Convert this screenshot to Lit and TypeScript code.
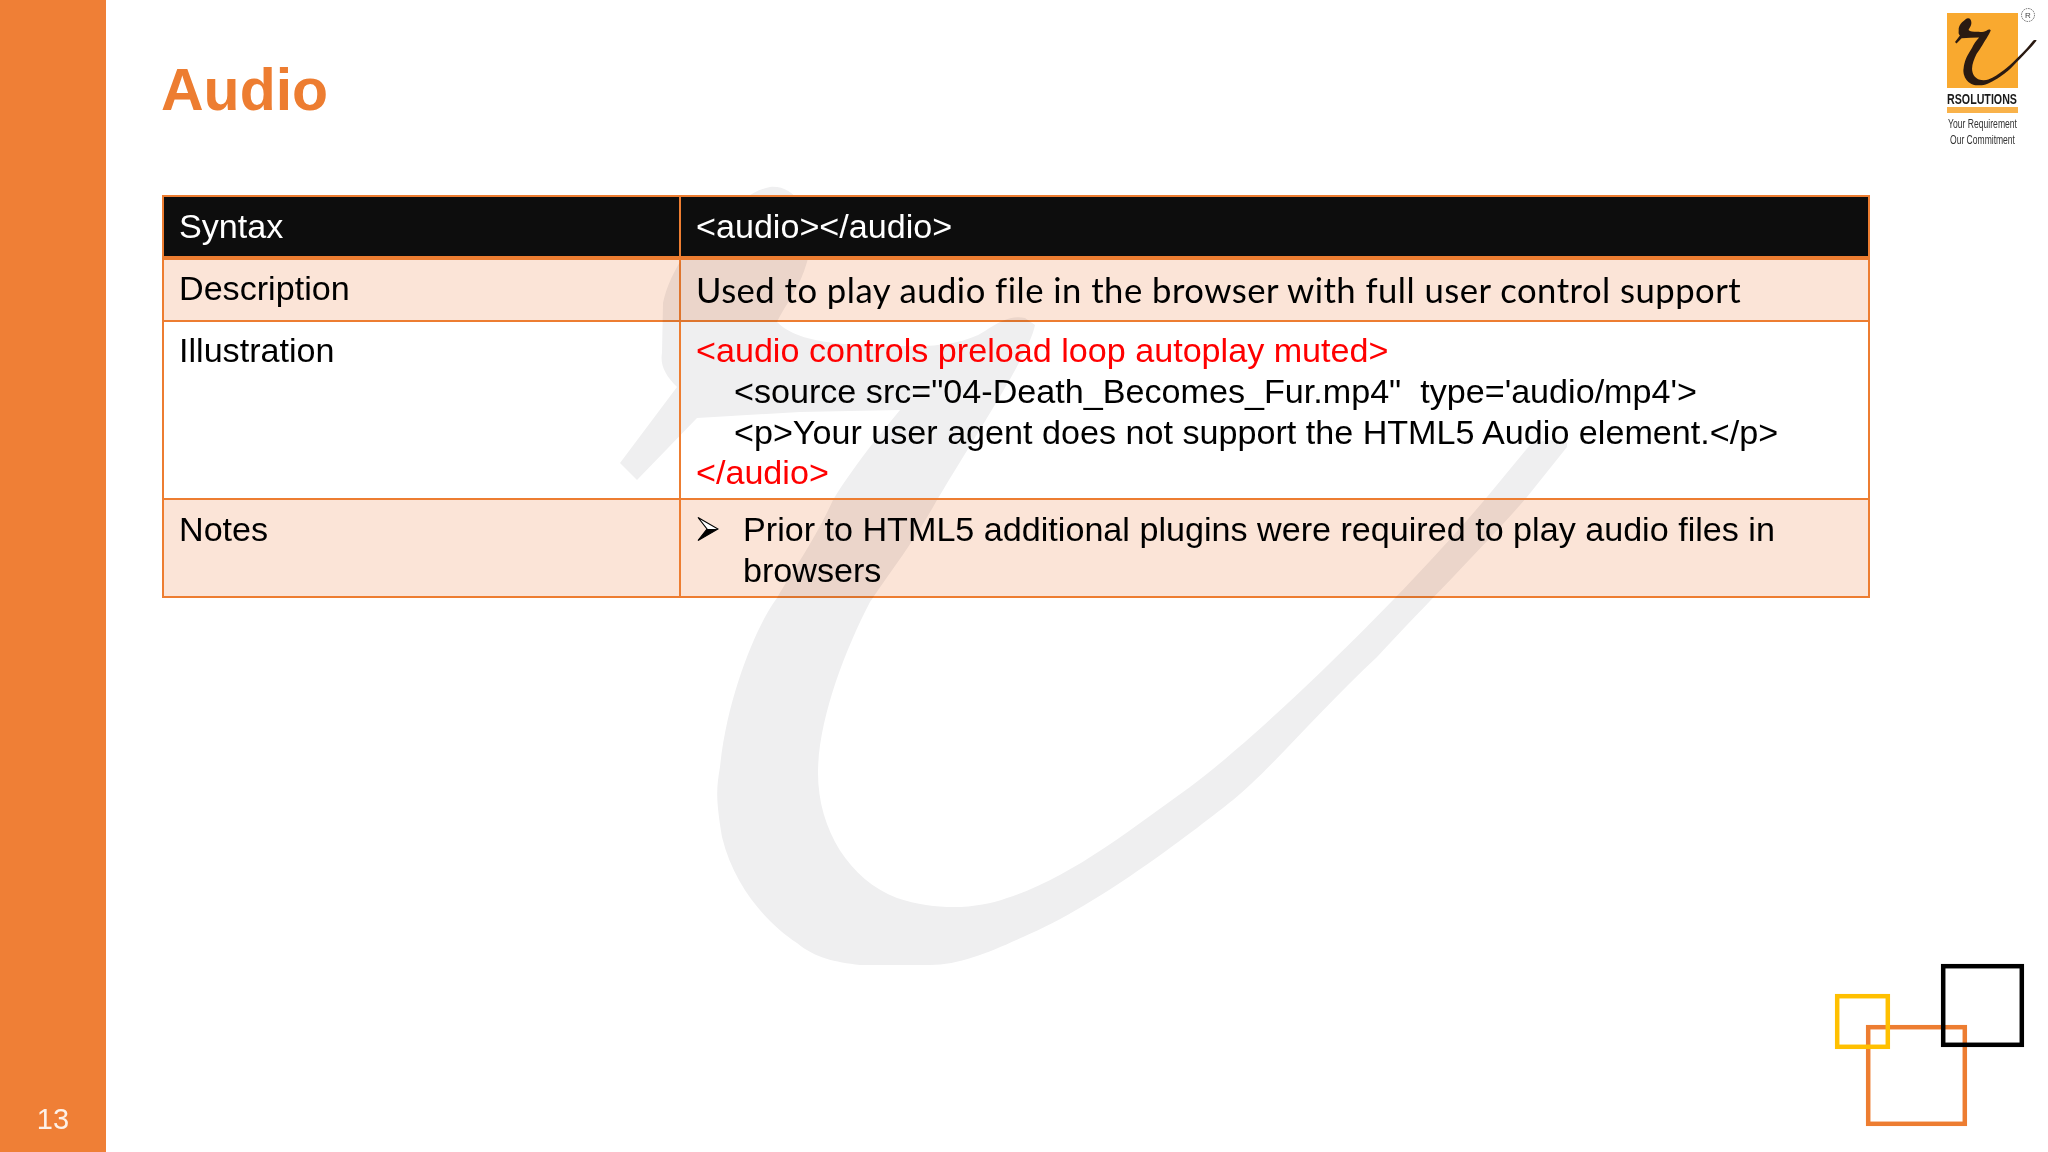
import { LitElement, html, css, svg } from "lit";
import { customElement } from "lit/decorators.js";

const R_PATH = `M770 187 C800 184 818 225 807 262 C800 288 785 305 777 322 C795 340 830 345 880 345
C925 348 962 346 985 331 C1000 321 1012 315 1025 318 L1035 325
C1030 352 985 420 937 500 C915 540 895 565 870 602 C845 650 818 720 818 773 C818 830 850 880 897 898
C940 912 980 908 1007 898 C1070 878 1130 830 1190 787 C1260 735 1400 600 1487 497 L1530 445 C1545 440 1560 438 1567 443 L1567 447
L1527 497 C1490 540 1433 597 1377 657 C1320 710 1270 770 1233 800 C1200 826 1100 905 1023 937
C990 952 960 965 930 965 L860 965 C835 962 815 958 797 943 C770 925 735 890 722 837
C716 800 716 790 720 767 C728 690 760 620 777 598
C790 575 815 540 833 500 C845 480 860 460 873 443 L900 410 L800 412 L697 418
L637 480 L620 463 L677 387 C665 375 660 365 662 353 L663 303 C670 270 695 235 720 220 C740 200 755 190 770 187 Z`;

@customElement("app-root")
export class AppRoot extends LitElement {
  static styles = css`
    :host {
      display: block;
      position: relative;
      width: 2048px;
      height: 1152px;
      overflow: hidden;
      background: #fff;
      font-family: "Liberation Sans", Arial, sans-serif;
      color: #000;
    }
    .slide { display: flex; width: 2048px; height: 1152px; position: relative; }
    .watermark { position: absolute; left: 0; top: 0; width: 2048px; height: 1152px; }
    .wm-path { fill: #efeff0; }
    .side {
      flex: 0 0 106px;
      background: #ef7f36;
      display: flex;
      flex-direction: column;
      justify-content: flex-end;
      align-items: center;
      padding-bottom: 16px;
      box-sizing: border-box;
      position: relative;
    }
    .page { color: #fdf1e8; font-size: 29px; line-height: 34px; }
    .main { position: relative; padding: 57px 0 0 56px; }
    h1 {
      margin: 0 0 72px -1px;
      font-size: 59px;
      line-height: 66px;
      font-weight: 700;
      color: #ed7d31;
    }
    .table {
      display: grid;
      width: 1708px;
      box-sizing: border-box;
      grid-template-columns: 517px 1189px;
      grid-template-rows: 63px 62px 178px 98px;
      border-top: 2px solid #ed7d31;
      border-left: 2px solid #ed7d31;
      font-size: 34.13px;
      line-height: 40.8px;
    }
    .cell {
      box-sizing: border-box;
      border-right: 2px solid #ed7d31;
      border-bottom: 2px solid #ed7d31;
      padding: 9px 14px 0 15px;
    }
    .head { background: #0d0d0d; color: #fff; border-bottom-width: 4px; }
    .tint { background: #fbe4d7; mix-blend-mode: multiply; }
    .tight { padding-top: 8px; }
    .code { padding-top: 8px; }
    .cal { font-family: Lato, "Open Sans", sans-serif; font-size: 34.67px; padding-top: 10px; letter-spacing: 0.47px; }
    .line { white-space: pre; }
    .ind { padding-left: 38px; }
    .red { color: #ff0000; }
    .bullet { display: flex; align-items: flex-start; }
    .arrow { flex: 0 0 22px; width: 22px; height: 26px; margin: 7px 24px 0 1px; }
    .logo { position: absolute; left: 1900px; top: 0; width: 148px; height: 160px; }
    .logo-text { filter: blur(0.6px); }
    .logo-r { filter: blur(0.4px); }
    .squares { position: absolute; left: 1820px; top: 950px; width: 228px; height: 202px; }
  `;

  private logo() {
    return html`<svg class="logo" viewBox="1900 0 148 160" aria-label="RSOLUTIONS logo">
      <rect x="1947" y="13" width="71" height="75" fill="#f9a92f" />
      <g class="logo-r" transform="translate(1901.7 2.2) scale(0.086)"><path d=${R_PATH} fill="#2a1a12" /></g>
      <circle cx="2028" cy="15" r="6.5" fill="none" stroke="#666" stroke-width="1" stroke-dasharray="1.5 1" />
      ${svg`<g class="logo-text">
        <text x="2028" y="18" font-size="8" text-anchor="middle" fill="#444" font-family="Liberation Sans">R</text>
        <text x="1947" y="104" font-size="15" font-weight="700" fill="#1a1a1a" font-family="Liberation Sans" textLength="70" lengthAdjust="spacingAndGlyphs">RSOLUTIONS</text>
        <text x="1948" y="128" font-size="12" fill="#333" font-family="Liberation Sans" textLength="69" lengthAdjust="spacingAndGlyphs">Your Requirement</text>
        <text x="1950" y="144" font-size="12" fill="#333" font-family="Liberation Sans" textLength="65" lengthAdjust="spacingAndGlyphs">Our Commitment</text>
      </g>`}
      <rect x="1947" y="107" width="71" height="6" fill="#f9b24a" />
    </svg>`;
  }

  render() {
    return html`
      <div class="slide">
        <svg class="watermark" viewBox="0 0 2048 1152" aria-hidden="true">
          <path class="wm-path" d=${R_PATH} />
        </svg>
        <aside class="side"><div class="page">13</div></aside>
        <main class="main">
          <h1>Audio</h1>
          <div class="table">
            <div class="cell head">Syntax</div>
            <div class="cell head">&lt;audio&gt;&lt;/audio&gt;</div>

            <div class="cell tint tight">Description</div>
            <div class="cell tint cal">Used to play audio file in the browser with full user control support</div>

            <div class="cell code">Illustration</div>
            <div class="cell code">
              <div class="line red">&lt;audio controls preload loop autoplay muted&gt;</div>
              <div class="line ind">&lt;source src="04-Death_Becomes_Fur.mp4"  type='audio/mp4'&gt;</div>
              <div class="line ind">&lt;p&gt;Your user agent does not support the HTML5 Audio element.&lt;/p&gt;</div>
              <div class="line red">&lt;/audio&gt;</div>
            </div>

            <div class="cell tint">Notes</div>
            <div class="cell tint">
              <div class="bullet">
                <svg class="arrow" viewBox="0 0 22 26" aria-hidden="true">
                  <path d="M1 1.5 L21 13 L1 24.5 L10 13 Z" fill="#fff" stroke="#000" stroke-width="1.2" stroke-linejoin="miter" />
                  <path d="M10 13 L21 13 L1 24.5 Z" fill="#000" />
                </svg>
                <div>Prior to HTML5 additional plugins were required to play audio files in browsers</div>
              </div>
            </div>
          </div>
        </main>
      </div>
      ${this.logo()}
      <svg class="squares" viewBox="1820 950 228 202" aria-hidden="true">
        <rect x="1868.2" y="1027.2" width="96.6" height="96.6" fill="none" stroke="#ed7d31" stroke-width="4.5" />
        <rect x="1837.2" y="996.2" width="50.6" height="50.6" fill="none" stroke="#ffc000" stroke-width="4.5" />
        <rect x="1943.2" y="966.2" width="78.6" height="78.6" fill="none" stroke="#000" stroke-width="4.5" />
      </svg>
    `;
  }
}
